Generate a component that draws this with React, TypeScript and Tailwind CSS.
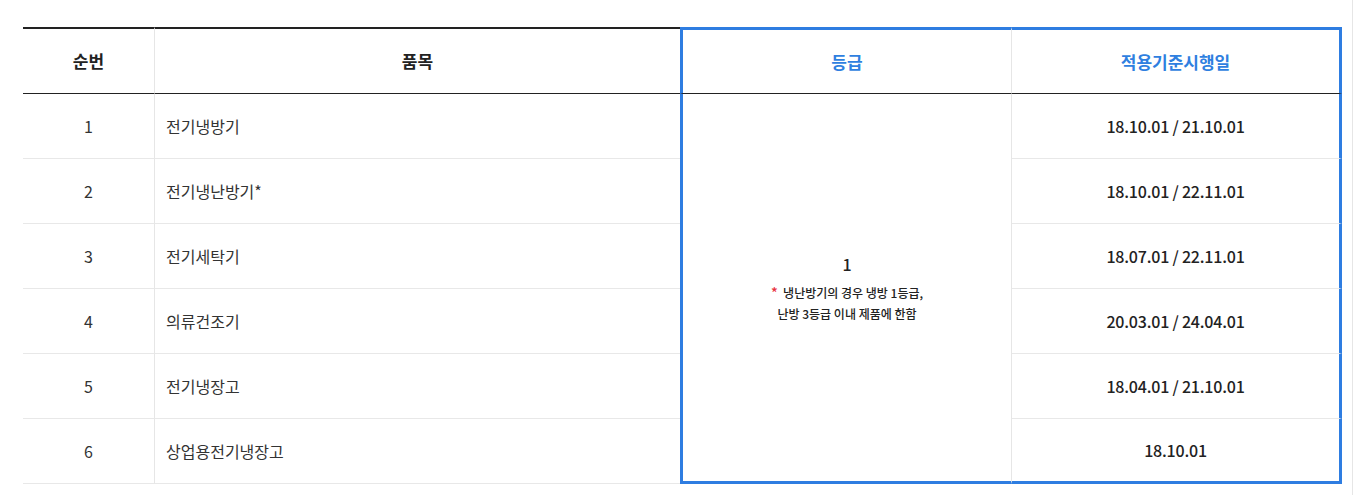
const rows = [
  { no: 1, name: "전기냉방기", date: "18.10.01 / 21.10.01" },
  { no: 2, name: "전기냉난방기*", date: "18.10.01 / 22.11.01" },
  { no: 3, name: "전기세탁기", date: "18.07.01 / 22.11.01" },
  { no: 4, name: "의류건조기", date: "20.03.01 / 24.04.01" },
  { no: 5, name: "전기냉장고", date: "18.04.01 / 21.10.01" },
  { no: 6, name: "상업용전기냉장고", date: "18.10.01" },
];

const font = "font-['Noto_Sans_CJK_KR','Noto_Sans',sans-serif]";

export default function App() {
  return (
    <div className={`flex h-[495px] w-full bg-white ${font}`}>
      <div className="flex-1 pl-[23px] pt-[27px]">
        <table className="w-[1319px] table-fixed border-separate border-spacing-0">
          <colgroup>
            <col className="w-[132px]" />
            <col className="w-[525px]" />
            <col className="w-[332px]" />
            <col className="w-[330px]" />
          </colgroup>
          <thead>
            <tr>
              <th className="h-[67px] border-t-2 border-b border-r border-t-[#222] border-b-[#222] border-r-[#e6e6e6] text-[17px] font-semibold text-[#222]">
                순번
              </th>
              <th className="h-[67px] border-t-2 border-b border-t-[#222] border-b-[#222] text-[17px] font-semibold text-[#222]">
                품목
              </th>
              <th className="h-[67px] border-t-[3px] border-l-[3px] border-r border-b border-t-[#2e7de1] border-l-[#2e7de1] border-r-[#e6e6e6] border-b-[#222] text-[17px] font-semibold text-[#2f7fe0]">
                등급
              </th>
              <th className="h-[67px] border-t-[3px] border-r-[3px] border-b border-t-[#2e7de1] border-r-[#2e7de1] border-b-[#222] text-[17px] font-semibold text-[#2f7fe0]">
                적용기준시행일
              </th>
            </tr>
          </thead>
          <tbody>
            {rows.map((r, i) => {
              const last = i === rows.length - 1;
              return (
                <tr key={r.no}>
                  <td className="h-[65px] border-b border-r border-b-[#e8e8e8] border-r-[#e6e6e6] text-center text-[16px] text-[#333]">
                    {r.no}
                  </td>
                  <td className="h-[65px] border-b border-b-[#e8e8e8] pl-[11px] text-[16px] text-[#333]">
                    {r.name}
                  </td>
                  {i === 0 && (
                    <td
                      rowSpan={6}
                      className="border-l-[3px] border-r border-b-[3px] border-l-[#2e7de1] border-r-[#e6e6e6] border-b-[#2e7de1] text-center align-middle"
                    >
                      <div className="text-[16px] font-medium text-[#222]">1</div>
                      <div className="mt-[6px] text-[12px] font-medium leading-[21px] text-[#222]">
                        <span className="text-[14px] text-[#e8323c]">*</span>
                        &nbsp; 냉난방기의 경우 냉방 1등급,
                        <br />
                        난방 3등급 이내 제품에 한함
                      </div>
                    </td>
                  )}
                  <td
                    className={`h-[65px] border-r-[3px] border-r-[#2e7de1] text-center text-[16px] font-medium tracking-[-0.2px] text-[#222] ${
                      last ? "border-b-[3px] border-b-[#2e7de1]" : "border-b border-b-[#e8e8e8]"
                    }`}
                  >
                    {r.date}
                  </td>
                </tr>
              );
            })}
          </tbody>
        </table>
      </div>
      <div className="w-[2px] border-l border-l-[#e6e6e6]" />
    </div>
  );
}
